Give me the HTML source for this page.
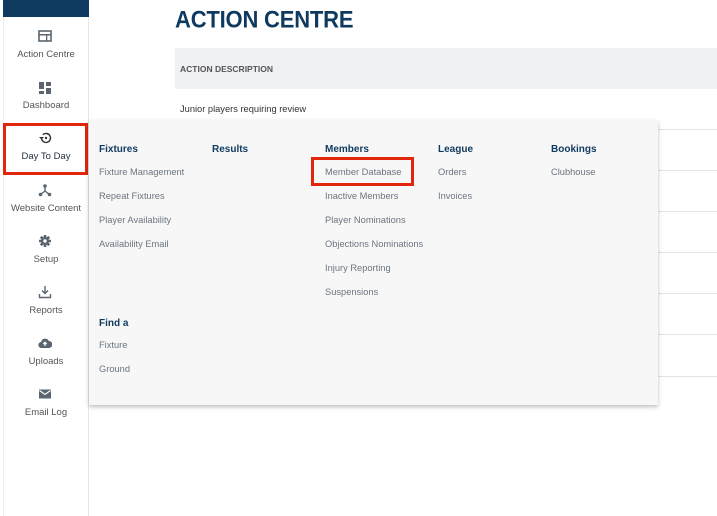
<!DOCTYPE html>
<html><head><style>
*{margin:0;padding:0;box-sizing:border-box}
body{width:717px;height:516px;background:#fff;font-family:"Liberation Sans",sans-serif;position:relative;overflow:hidden}
.side{position:absolute;left:3px;top:0;width:86px;height:516px;background:#fff;border-right:1px solid #e6e6e6;border-left:1px solid #eee}
.navy{position:absolute;left:3px;top:0;width:86px;height:17px;background:#0f3a5f}
.it{position:absolute;left:3px;width:86px;text-align:center;font-size:9.5px;color:#555}
.ic{position:absolute;left:38px;width:14px;height:14px}
h1{position:absolute;left:175px;top:6px;font-size:22px;font-weight:900;color:#0f3a5f;letter-spacing:-0.2px;transform:scaleY(1.08);transform-origin:left top}
.th{position:absolute;left:175px;top:48px;width:542px;height:41px;background:#eff1f5;font-size:8.5px;font-weight:bold;color:#555;padding:16px 0 0 5px}
.row{position:absolute;left:175px;width:542px;border-top:1px solid #e4e4e4}
.dd{position:absolute;left:89px;top:120px;width:569px;height:285px;background:#f7f7f7;box-shadow:0 2px 4px rgba(0,0,0,.25)}
.t{position:absolute;font-size:9.3px;color:#6a7580;white-space:nowrap}
.h{position:absolute;font-size:10px;font-weight:bold;color:#0f3a5f;white-space:nowrap}
.red{position:absolute;border:3px solid #e1260b}
</style></head><body>
<h1>ACTION CENTRE</h1>
<div class="th">ACTION DESCRIPTION</div>
<div class="t" style="left:180px;top:104px;color:#333">Junior players requiring review</div>
<div class="row" style="top:129px"></div><div class="row" style="top:170px"></div><div class="row" style="top:211px"></div><div class="row" style="top:252px"></div><div class="row" style="top:293px"></div><div class="row" style="top:334px"></div><div class="row" style="top:376px"></div>
<div class="side"></div><div class="navy"></div>
<svg class="ic" style="top:29px" viewBox="0 0 14 14"><rect x="1" y="2" width="12" height="10" fill="none" stroke="#5a6570" stroke-width="1.6"/><rect x="1" y="5" width="12" height="1.5" fill="#5a6570"/><rect x="8" y="6" width="1.3" height="6" fill="#5a6570"/></svg>
<div class="it" style="top:49px">Action Centre</div>
<svg class="ic" style="top:81px" viewBox="0 0 14 14" fill="#5a6570"><rect x="1" y="1" width="5" height="7"/><rect x="8" y="1" width="5" height="4"/><rect x="1" y="10" width="5" height="3"/><rect x="8" y="7" width="5" height="6"/></svg>
<div class="it" style="top:100px">Dashboard</div>
<svg class="ic" style="top:131px" viewBox="0 0 14 14"><path d="M3.5 7a4.5 4.5 0 1 0 1.3-3.2" fill="none" stroke="#333" stroke-width="1.4"/><path d="M1 6l2.5 2.5L6 6z" fill="#333"/><circle cx="8" cy="7" r="1.2" fill="#333"/></svg>
<div class="it" style="top:151px;color:#1d2d3d">Day To Day</div>
<svg class="ic" style="top:183px" viewBox="0 0 14 14" fill="#5a6570"><circle cx="7" cy="3" r="1.8"/><circle cx="2.5" cy="11.5" r="1.8"/><circle cx="11.5" cy="11.5" r="1.8"/><path d="M7 3v5L2.5 11.5M7 8l4.5 3.5" stroke="#5a6570" stroke-width="1.4" fill="none"/></svg>
<div class="it" style="top:203px">Website Content</div>
<svg class="ic" style="top:234px" viewBox="0 0 14 14"><g stroke="#5a6570" stroke-width="2.6"><path d="M7 1v12M1 7h12M2.8 2.8l8.4 8.4M11.2 2.8l-8.4 8.4"/></g><circle cx="7" cy="7" r="4" fill="#5a6570"/><circle cx="7" cy="7" r="1.7" fill="#fff"/></svg>
<div class="it" style="top:254px">Setup</div>
<svg class="ic" style="top:285px" viewBox="0 0 14 14" fill="none" stroke="#5a6570" stroke-width="1.4"><path d="M7 1v7M4 5.5L7 8.5 10 5.5M1.5 9v3.5h11V9"/></svg>
<div class="it" style="top:305px">Reports</div>
<svg class="ic" style="top:336px" viewBox="0 0 14 14"><path d="M3.5 12a3 3 0 0 1-.3-6 4 4 0 0 1 7.6-1 3.5 3.5 0 0 1 .2 7z" fill="#5a6570"/><path d="M7 10V6.5M5.3 8L7 6.3 8.7 8" stroke="#fff" stroke-width="1.3" fill="none"/></svg>
<div class="it" style="top:356px">Uploads</div>
<svg class="ic" style="top:387px" viewBox="0 0 14 14"><rect x="1" y="2.5" width="12" height="9" fill="#5a6570"/><path d="M1.5 3.5L7 7.5l5.5-4" stroke="#fff" stroke-width="1.1" fill="none"/></svg>
<div class="it" style="top:407px">Email Log</div>
<div class="red" style="left:3px;top:123px;width:85px;height:52px"></div>
<div class="dd">
<div class="h" style="left:10px;top:24px">Fixtures</div>
<div class="t" style="left:10px;top:47px">Fixture Management</div>
<div class="t" style="left:10px;top:71px">Repeat Fixtures</div>
<div class="t" style="left:10px;top:95px">Player Availability</div>
<div class="t" style="left:10px;top:119px">Availability Email</div>
<div class="h" style="left:123px;top:24px">Results</div>
<div class="h" style="left:236px;top:24px">Members</div>
<div class="t" style="left:236px;top:47px">Member Database</div>
<div class="t" style="left:236px;top:71px">Inactive Members</div>
<div class="t" style="left:236px;top:95px">Player Nominations</div>
<div class="t" style="left:236px;top:119px">Objections Nominations</div>
<div class="t" style="left:236px;top:143px">Injury Reporting</div>
<div class="t" style="left:236px;top:167px">Suspensions</div>
<div class="h" style="left:349px;top:24px">League</div>
<div class="t" style="left:349px;top:47px">Orders</div>
<div class="t" style="left:349px;top:71px">Invoices</div>
<div class="h" style="left:462px;top:24px">Bookings</div>
<div class="t" style="left:462px;top:47px">Clubhouse</div>
<div class="h" style="left:10px;top:198px">Find a</div>
<div class="t" style="left:10px;top:220px">Fixture</div>
<div class="t" style="left:10px;top:244px">Ground</div>
</div>
<div class="red" style="left:311px;top:157px;width:103px;height:29px"></div>
</body></html>
